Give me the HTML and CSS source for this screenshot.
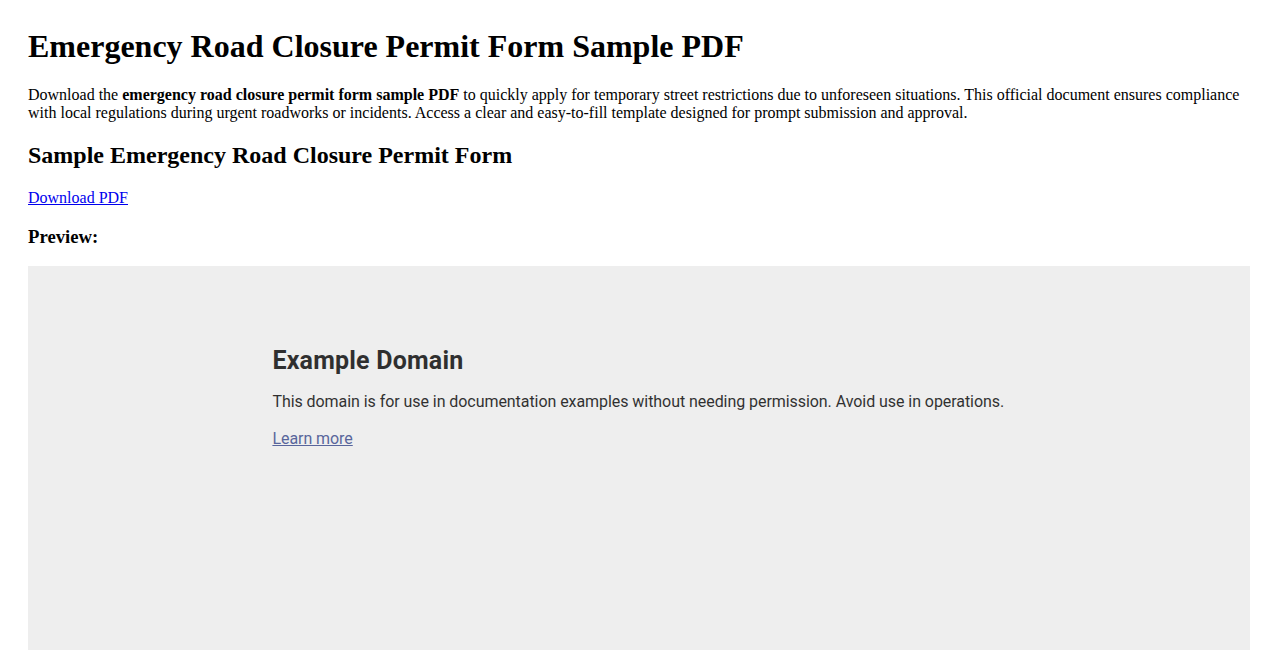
FILE: index.html
```html
<!DOCTYPE html>
<html>
<head>
<meta charset="utf-8">
<title>Emergency Road Closure Permit Form Sample PDF</title>
<link rel="stylesheet" href="styles.css">
</head>
<body>
<h1 class="title">Emergency Road Closure Permit Form Sample PDF</h1>
<p class="intro">Download the <strong>emergency road closure permit form sample PDF</strong> to quickly apply for temporary street restrictions due to unforeseen situations. This official document ensures compliance with local regulations during urgent roadworks or incidents. Access a clear and easy-to-fill template designed for prompt submission and approval.</p>
<h2 class="subtitle">Sample Emergency Road Closure Permit Form</h2>
<p class="download"><a href="#">Download PDF</a></p>
<h3 class="preview-label">Preview:</h3>
<div class="preview">
  <div class="frame-body">
    <div class="frame-content">
      <h1 class="frame-title">Example Domain</h1>
      <p class="frame-text">This domain is for use in documentation examples without needing permission. Avoid use in operations.</p>
      <p class="frame-text"><a class="frame-link" href="#">Learn more</a></p>
    </div>
  </div>
</div>
</body>
</html>
```
FILE: styles.css
```css
html { background: #fff; }
body {
  margin: 0;
  padding: 28px 28px 0;
  font-family: "Liberation Serif", "Times New Roman", serif;
  font-size: 16px;
  color: #000;
}
.title { font-size: 32px; margin: 0 0 21px; }
.intro { margin: 16px 0; line-height: 18px; }
.subtitle { font-size: 24px; margin: 20px 0; }
.download { margin: 16px 0; }
.download a { color: #0000ee; }
.preview-label { font-size: 18.72px; margin: 18.72px 0; }
.preview {
  background: #eee;
  height: 500px;
  overflow: hidden;
}
.frame-body {
  width: 60%;
  margin: 0 auto;
  padding-top: 77px;
  font-family: Roboto, "Noto Sans", sans-serif;
  line-height: 21px;
}
.frame-content { opacity: 0.8; }
.frame-title {
  font-size: 25px;
  line-height: 28px;
  letter-spacing: 0.2px;
  padding-top: 4px;
  margin: 0 0 16px;
}
.frame-text { margin: 16px 0; letter-spacing: -0.06px; white-space: nowrap; }
.frame-link { color: #334488; }
```
